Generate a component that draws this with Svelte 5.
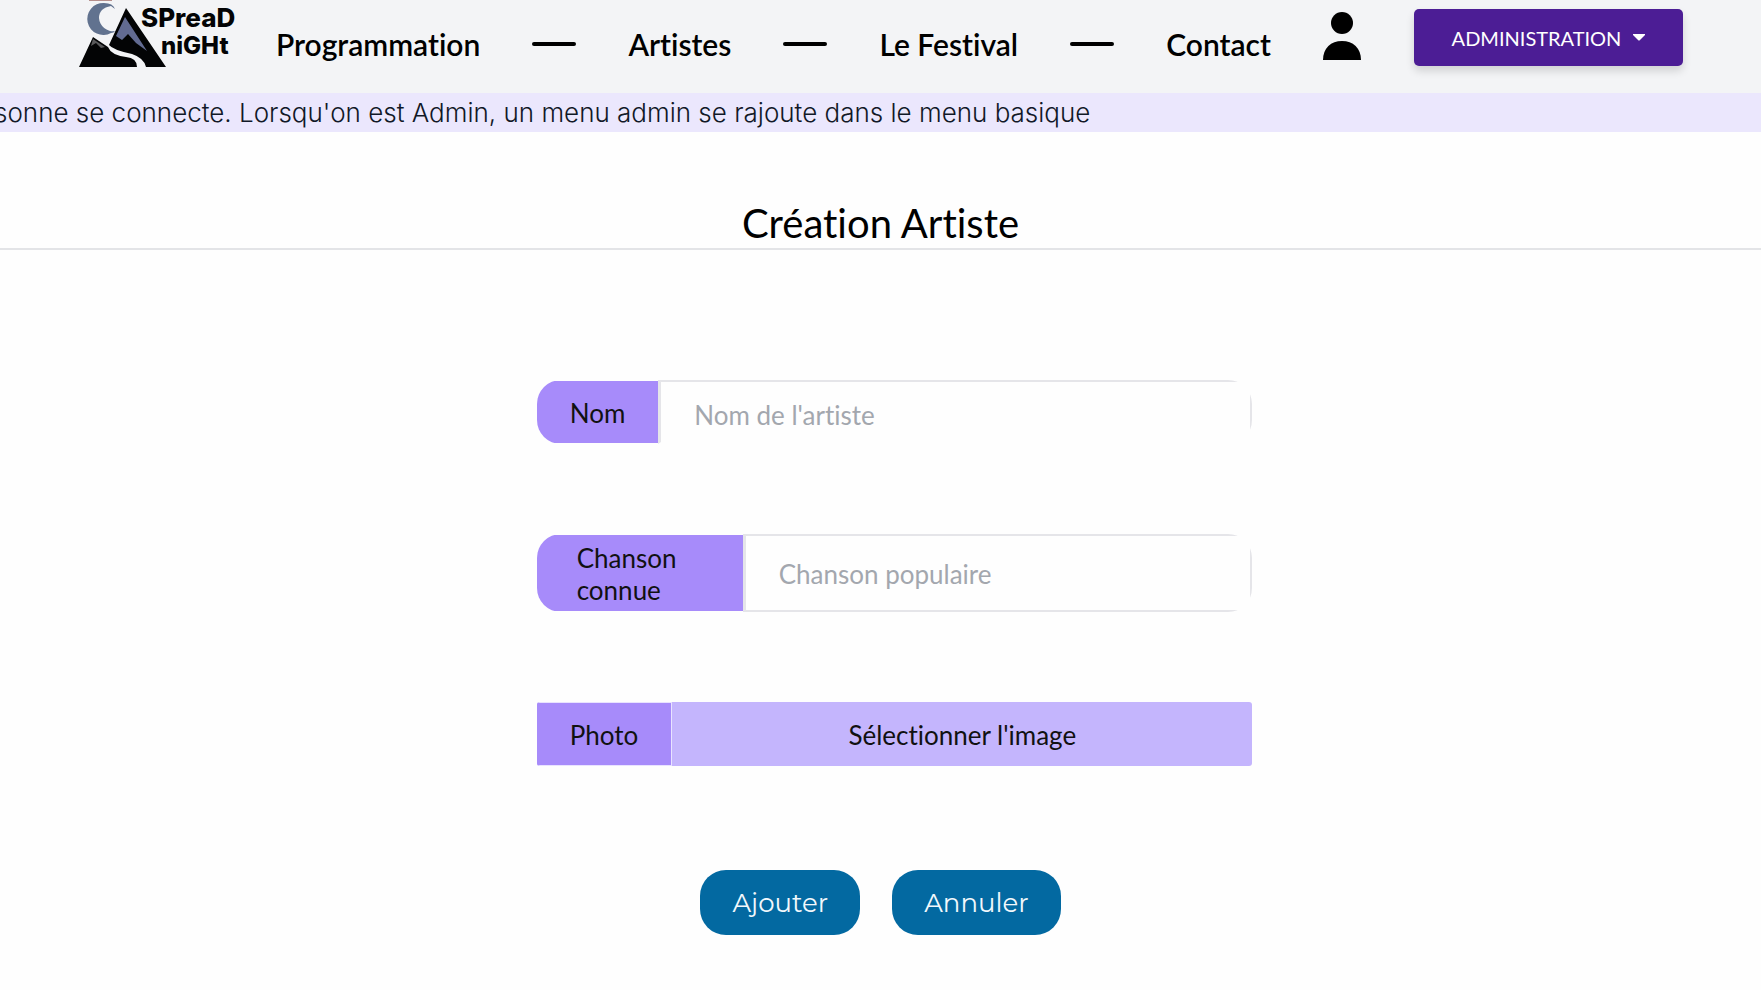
<script>
  const links = ['Programmation', 'Artistes', 'Le Festival', 'Contact'];
  let nom = $state('');
  let chanson = $state('');
</script>

<header>
  <a class="logo" href="#accueil" aria-label="Spread Night">
    <svg width="160" height="68" viewBox="0 0 160 68">
      <rect x="10" width="23" height="1" fill="#b58e8b" />
      <path d="M25 3A16 16 0 1 0 32 33Q35 33 36 31A14 14 0 0 1 20 18Q20 8 32 6L36 9Q34 3 25 3Z" fill="#61728f" />
      <path d="M47 8L87 67H67Q65 58 53 54Q34 50 30 45Z" fill="#030405" />
      <path d="M46 17L68 51L57 43L49 34L43 40L37 36Z" fill="#626b92" />
      <path d="M14 37L29 47Q32 55 47 57Q58 58 58 67H0Z" fill="#030405" />
      <path d="M14 39L12 46L17 43L22 48L26 47Z" fill="#59595b" />
      <text x="62" y="27" font-size="26">SPreaD</text>
      <text x="82" y="54" font-size="24">niGHt</text>
    </svg>
  </a>
  <nav>
    {#each links as link, i}
      {#if i > 0}<span class="dash"></span>{/if}
      <a href="#{link}">{link}</a>
    {/each}
  </nav>
  <a class="user" href="#compte" aria-label="Compte">
    <svg width="38" height="48" viewBox="0 0 38 48">
      <circle cx="19" cy="11" r="11" />
      <path d="M0 48C0 36 8 29 19 29S38 36 38 48Z" />
    </svg>
  </a>
  <button class="admin" type="button">
    ADMINISTRATION
    <svg width="12" height="7" viewBox="0 0 12 7"><path d="M0 0H12V1L7 6Q6 7 5 6L0 1Z" fill="#fff" /></svg>
  </button>
</header>

<div class="banner"><p>sonne se connecte. Lorsqu'on est Admin, un menu admin se rajoute dans le menu basique</p></div>

<main>
  <h1>Création Artiste</h1>
  <form>
    <div class="fields">
      <div class="field">
        <label for="nom">Nom</label>
        <input id="nom" class="open" type="text" placeholder="Nom de l'artiste" bind:value={nom} />
      </div>
      <div class="field tall">
        <label for="chanson">Chanson connue</label>
        <input id="chanson" type="text" placeholder="Chanson populaire" bind:value={chanson} />
      </div>
      <div class="photo">
        <span>Photo</span>
        <label for="photo">Sélectionner l'image</label>
        <input id="photo" type="file" accept="image/*" />
      </div>
    </div>
    <div class="actions">
      <button type="button">Ajouter</button>
      <button type="button">Annuler</button>
    </div>
  </form>
</main>

<style>
  :global(body) {
    margin: 0;
    background: #fefefe;
    font-family: Lato, sans-serif;
    font-variant-ligatures: none;
    color: #000;
  }
  * { box-sizing: border-box; }
  header {
    display: flex;
    align-items: flex-start;
    height: 93px;
    padding: 0 78px 0 79px;
    background: #f3f4f6;
  }
  .logo { flex: none; height: 68px; }
  .logo svg { display: block; }
  .logo text { font-family: Inter, sans-serif; font-weight: 800; fill: #030405; }
  nav {
    flex: 1;
    display: flex;
    align-items: center;
    justify-content: space-between;
    margin: 26px 52px 0 37px;
    line-height: 36px;
  }
  nav a {
    color: #000;
    font-size: 30px;
    font-weight: 600;
    text-decoration: none;
    white-space: nowrap;
  }
  .dash {
    width: 44px;
    height: 4px;
    border-radius: 2px;
    background: #000;
  }
  .user { flex: none; margin: 12px 53px 0 0; }
  .user svg { display: block; }
  .admin {
    flex: none;
    display: flex;
    align-items: center;
    justify-content: center;
    gap: 12px;
    width: 269px;
    height: 57px;
    margin-top: 9px;
    padding: 0;
    border: 0;
    border-radius: 5px;
    background: #4c1d95;
    color: #fff;
    font: 400 20px/28px Lato, sans-serif;
    box-shadow: 0 5px 8px rgb(0 0 0 / 0.14);
  }
  .banner {
    overflow: hidden;
    background: #ebe7fd;
  }
  .banner p {
    margin: 0 0 0 -6px;
    color: #111827;
    font: 300 26px/39px Inter, sans-serif;
    white-space: nowrap;
  }
  h1 {
    margin: 67px 0 0;
    padding-bottom: 1px;
    border-bottom: 2px solid #e3e4e7;
    text-align: center;
    font-size: 40px;
    font-weight: 400;
    line-height: 48px;
  }
  form {
    width: 42%;
    margin: 0 auto;
    padding-top: 130px;
  }
  .fields {
    display: flex;
    flex-direction: column;
    gap: 90px;
    padding-left: 26px;
    margin-right: -2px;
    font-size: 26px;
    line-height: 32px;
    color: #111;
  }
  .field {
    display: flex;
    height: 64px;
    border-radius: 24px;
    overflow: hidden;
  }
  .tall { height: 78px; }
  .field label {
    flex: none;
    display: flex;
    align-items: center;
    padding: 2px 33px 0;
    margin: 1px 0;
    background: #a78bfa;
  }
  .tall label { width: 206px; padding: 2px 40px 0; }
  .field input {
    flex: 1;
    min-width: 0;
    padding: 6px 33px 0;
    border: 2px solid #e5e5e9;
    border-left-width: 3px;
    border-radius: 0;
    background: transparent;
    font: inherit;
    outline: 0;
  }
  .tall input { padding-top: 2px; }
  .open.open { border-bottom-color: transparent; }
  .field input::placeholder { color: #a3a7ae; opacity: 1; }
  .photo {
    position: relative;
    display: flex;
    height: 64px;
    border-radius: 3px;
    overflow: hidden;
    background: #c4b5fd;
  }
  .photo span {
    padding: 16px 33px 14px;
    border: 1px solid #e9e3ff;
    border-left: 0;
    background: #a78bfa;
  }
  .photo label { flex: 1; padding: 17px 0 15px; text-align: center; cursor: pointer; }
  .photo input { position: absolute; width: 1px; height: 1px; opacity: 0; }
  .actions {
    display: flex;
    justify-content: center;
    gap: 32px;
    margin-top: 104px;
  }
  .actions button {
    height: 65px;
    padding: 0 32px;
    border: 0;
    border-radius: 26px;
    background: #0369a1;
    color: #f2f8fc;
    font: 400 26px/32px Montserrat, Inter, sans-serif;
  }
</style>
